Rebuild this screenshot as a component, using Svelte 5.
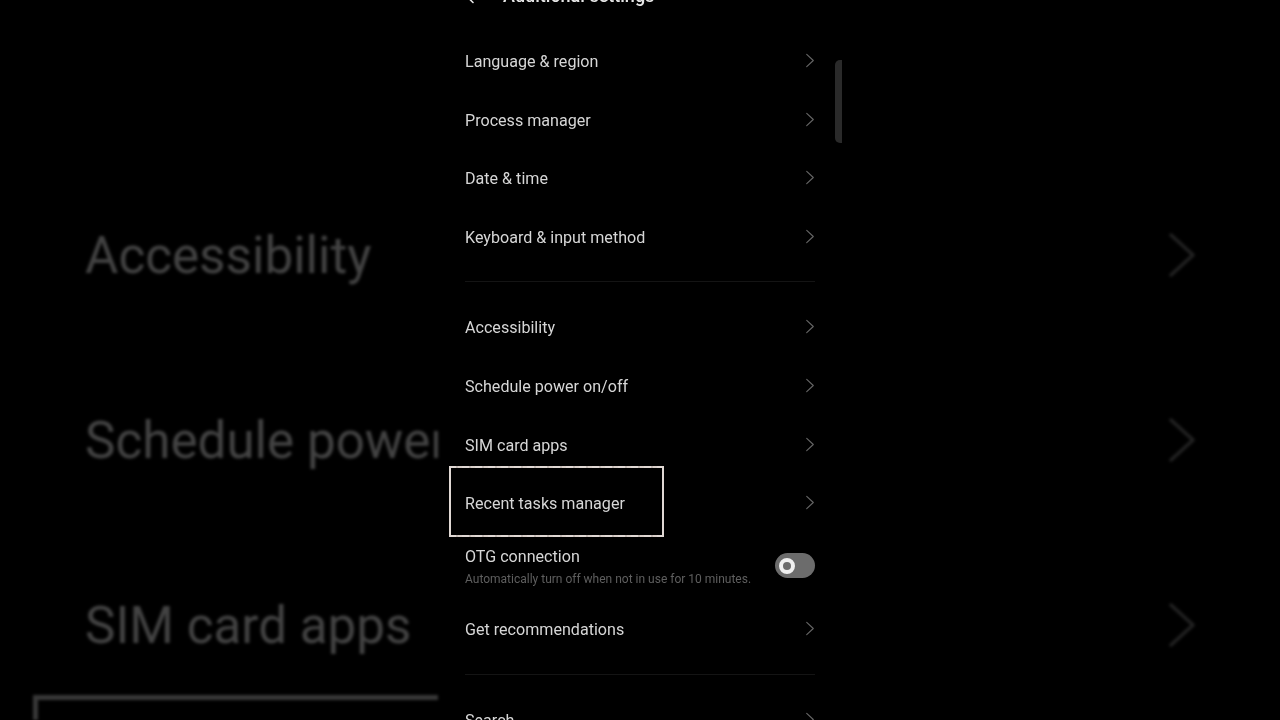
<script lang="ts">
  const firstGroup = ['Language & region', 'Process manager', 'Date & time', 'Keyboard & input method'];
  const secondGroup = ['Accessibility', 'Schedule power on/off', 'SIM card apps', 'Recent tasks manager'];
  const zoomed = ['Accessibility', 'Schedule power on/off', 'SIM card apps'];
</script>

{#snippet chevron()}
  <svg class="chevron" viewBox="0 0 10 16" fill="none" stroke="currentColor" stroke-width="1.2" stroke-linecap="round" stroke-linejoin="round" aria-hidden="true">
    <path d="M1.5 1.5 8.5 8 1.5 14.5"></path>
  </svg>
{/snippet}

<div class="stage">
  <div class="backdrop left">
    {#each zoomed as label}
      <div class="big-row"><span>{label}</span></div>
    {/each}
    <div class="big-row boxed"><div class="big-ring"></div></div>
  </div>

  <main class="phone">
    <header class="header">
      <svg class="back" viewBox="0 0 10 16" fill="none" stroke="currentColor" stroke-width="1.6" stroke-linecap="round" stroke-linejoin="round" aria-hidden="true">
        <path d="M8 1.5 1.5 8 8 14.5"></path>
      </svg>
      <h1>Additional settings</h1>
    </header>

    <div class="scrollbar"></div>

    {#each firstGroup as label}
      <div class="row"><span>{label}</span>{@render chevron()}</div>
    {/each}

    <div class="divider"></div>

    {#each secondGroup as label}
      <div class="row">
        {#if label === 'Recent tasks manager'}<div class="ring"></div>{/if}
        <span>{label}</span>{@render chevron()}
      </div>
    {/each}

    <div class="row otg">
      <div class="otg-text">
        <span>OTG connection</span>
        <small>Automatically turn off when not in use for 10 minutes.</small>
      </div>
      <div class="toggle"><div class="knob"></div></div>
    </div>

    <div class="row"><span>Get recommendations</span>{@render chevron()}</div>

    <div class="divider"></div>

    <div class="row"><span>Search</span>{@render chevron()}</div>
  </main>

  <div class="backdrop right">
    {#each zoomed as label}
      <div class="big-row">
        <svg class="big-chevron" viewBox="0 0 30 46" fill="none" stroke="currentColor" stroke-width="3.5" stroke-linecap="round" stroke-linejoin="round" aria-hidden="true">
          <path d="M3 3 25 23 3 43"></path>
        </svg>
      </div>
    {/each}
  </div>
</div>

<style>
  :global(body) {
    background: #000;
  }

  .stage {
    display: flex;
    width: 1280px;
    height: 720px;
    overflow: hidden;
    background: #000;
    font-family: Roboto, "Liberation Sans", sans-serif;
  }

  .backdrop {
    flex: 0 0 438px;
    height: 720px;
    padding-top: 162px;
    box-sizing: border-box;
    overflow: hidden;
    filter: blur(1.4px);
  }

  .big-row {
    position: relative;
    display: flex;
    align-items: center;
    height: 185px;
    font-size: 51.2px;
    color: #434343;
    white-space: nowrap;
  }

  .big-row > span {
    padding-top: 2px;
  }

  .left .big-row {
    padding-left: 85px;
  }

  .right .big-row {
    padding-left: 326px;
  }

  .big-chevron {
    width: 30px;
    height: 46px;
    color: #222;
  }

  .big-ring {
    position: absolute;
    left: 33px;
    top: -22px;
    width: 680px;
    height: 200px;
    box-sizing: border-box;
    border: 5px solid #383838;
  }

  .phone {
    position: relative;
    flex: 0 0 404px;
    height: 720px;
    overflow: hidden;
    filter: blur(0.5px);
  }

  .header {
    display: flex;
    align-items: center;
    height: 71.7px;
    margin-top: -40px;
    padding-left: 27px;
    color: #e6e6e6;
  }

  .back {
    width: 10px;
    height: 16px;
    margin-right: 28px;
  }

  h1 {
    margin: 0;
    font-size: 18px;
    font-weight: 500;
  }

  .scrollbar {
    position: absolute;
    right: 0;
    top: 60px;
    width: 7px;
    height: 83px;
    border-radius: 5px 0 0 5px;
    background: #2a2a2a;
  }

  .row {
    position: relative;
    display: flex;
    align-items: center;
    justify-content: space-between;
    height: 58.6px;
    padding: 0 27px 0 27px;
    font-size: 16.1px;
    color: #d6d6d6;
  }

  .row > span {
    padding-top: 1px;
  }

  .chevron {
    width: 10px;
    height: 15px;
    margin-top: -1px;
    color: #666;
  }

  .divider {
    height: 1px;
    margin: 15px 27px 16px 27px;
    background: #141414;
  }

  .ring {
    position: absolute;
    left: 11px;
    top: -8px;
    width: 215px;
    height: 71px;
    box-sizing: border-box;
    border: 2px solid #d4cdc9;
    border-image: repeating-linear-gradient(90deg, #e0d8d4 0 7px, #c4bab5 7px 9px, #d9cfc9 9px 13px) 2;
  }

  .otg {
    height: 67.6px;
  }

  .otg-text {
    display: flex;
    flex-direction: column;
    gap: 6px;
  }

  .otg-text small {
    font-size: 12px;
    color: #5f5f5f;
  }

  .toggle {
    display: flex;
    align-items: center;
    width: 40px;
    height: 25px;
    margin-top: -1px;
    padding-left: 4px;
    box-sizing: border-box;
    border-radius: 13px;
    background: #6c6c6c;
  }

  .knob {
    width: 16px;
    height: 16px;
    box-sizing: border-box;
    border: 4px solid #f0f0f0;
    border-radius: 50%;
    background: #6c6c6c;
  }
</style>
